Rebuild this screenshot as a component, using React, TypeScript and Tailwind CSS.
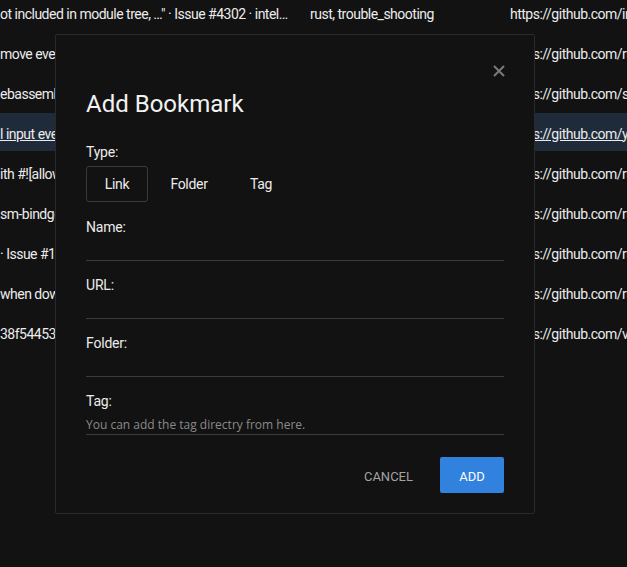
import React from "react";

type Row = { a: string; b: string; c: string; active?: boolean };

const rows: Row[] = [
  { a: 'ot included in module tree, …" · Issue #4302 · intel…', b: "rust, trouble_shooting", c: "https://github.com/intellij-rust/intellij-rust" },
  { a: "move events are not fired", b: "javascript, dom", c: "https://github.com/rustwasm/wasm-bindgen" },
  { a: "ebassembly and rust", b: "rust, wasm", c: "https://github.com/sunfishcode/wasm" },
  { a: "l input events on canvas", b: "javascript", c: "https://github.com/yewstack/yew", active: true },
  { a: "ith #![allow(dead_code)]", b: "rust", c: "https://github.com/rust-lang/rust" },
  { a: "sm-bindgen closures", b: "rust, wasm", c: "https://github.com/rustwasm/wasm-pack" },
  { a: "· Issue #1234 · rustwasm", b: "rust", c: "https://github.com/rustwasm/book" },
  { a: "when down the mouse", b: "javascript", c: "https://github.com/rustwasm/gloo" },
  { a: "38f544538ab12c", b: "git", c: "https://github.com/vuejs/vue" },
];

const fields = ["Name:", "URL:", "Folder:"];

export default function App() {
  return (
    <div
      className="relative w-[627px] h-[567px] overflow-hidden bg-[#121212] text-[#ececec]"
      style={{ fontFamily: "Roboto, 'Liberation Sans', sans-serif" }}
    >
      {/* background table */}
      <div className="-mt-[8px] flex flex-col">
        {rows.map((r, i) => (
          <div key={i} className="h-[40px] py-[1px]">
            <div
              className={`h-[38px] flex items-center pt-[3px] text-[14px] leading-[20px] tracking-[-0.5px] whitespace-nowrap ${
                r.active ? "bg-[#1f2b3a] underline" : ""
              }`}
            >
              <div className="w-[310px] shrink-0 overflow-hidden">{r.a}</div>
              <div className="w-[200px] shrink-0 overflow-hidden">{r.b}</div>
              <div className="shrink-0">{r.c}</div>
            </div>
          </div>
        ))}
      </div>

      {/* dialog */}
      <div className="absolute left-[55px] top-[34px] w-[480px] h-[480px] border border-[#2a2a2a] rounded-[2px] bg-[#121212] px-[30px] pt-[53px]">
        <button className="absolute top-[30px] right-[29px] w-[12px] h-[12px]">
          <svg width="12" height="12" viewBox="0 0 12 12">
            <path d="M1 1L11 11M11 1L1 11" stroke="#7a7a7a" strokeWidth="2" />
          </svg>
        </button>

        <div className="text-[24px] leading-[32px] text-[#f2f2f2]">Add Bookmark</div>

        <div className="mt-[22px] text-[14px] leading-[20px] tracking-[-0.2px] text-[#ececec]">Type:</div>
        <div className="mt-[4px] flex gap-[10px] text-[14px] tracking-[-0.3px] text-[#ececec]">
          <div className="w-[62px] h-[36px] flex items-center justify-center border border-[#3a3a3a] rounded-[3px]">
            Link
          </div>
          <div className="w-[62px] h-[36px] flex items-center justify-center">Folder</div>
          <div className="w-[62px] h-[36px] flex items-center justify-center">Tag</div>
        </div>

        <div className="mt-[15px] flex flex-col gap-[14px]">
          {fields.map((f) => (
            <div key={f}>
              <div className="text-[14px] leading-[20px] tracking-[-0.2px] text-[#ececec]">{f}</div>
              <div className="h-[24px] border-b border-[#3c3c3c]" />
            </div>
          ))}
          <div>
            <div className="text-[14px] leading-[20px] tracking-[-0.2px] text-[#ececec]">Tag:</div>
            <div className="h-[24px] border-b border-[#3c3c3c] pt-[6px]">
              <div
                className="text-[12px] leading-[16px] text-[#8a8a8a]"
                style={{ fontFamily: "'Open Sans', 'Noto Sans', sans-serif" }}
              >
                You can add the tag directry from here.
              </div>
            </div>
          </div>
        </div>

        <div className="mt-[22px] flex justify-end items-center gap-[11px]">
          <button className="h-[36px] px-[16px] pt-[3px] text-[13px] text-[#a3a3a3]">CANCEL</button>
          <button className="w-[64px] h-[36px] pt-[3px] rounded-[2px] bg-[#3181de] text-[13px] text-white">ADD</button>
        </div>
      </div>
    </div>
  );
}
